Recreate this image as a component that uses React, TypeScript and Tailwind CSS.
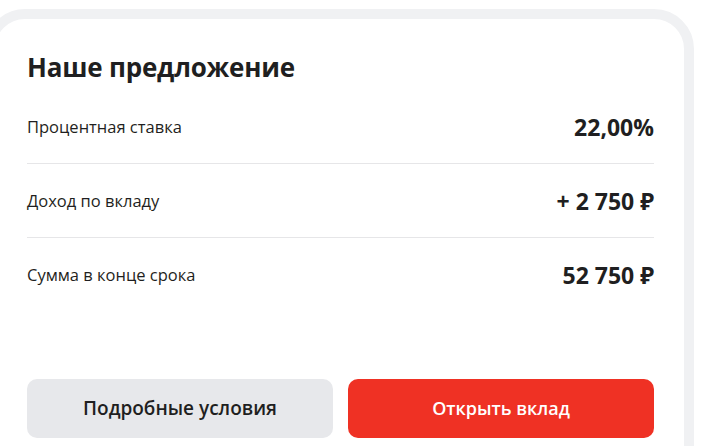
import React from "react";

type Row = { label: string; value: string };

const rows: Row[] = [
  { label: "Процентная ставка", value: "22,00%" },
  { label: "Доход по вкладу", value: "+ 2 750 ₽" },
  { label: "Сумма в конце срока", value: "52 750 ₽" },
];

export default function App() {
  return (
    <div
      className="h-[446px] w-[707px] overflow-hidden bg-white"
      style={{ fontFamily: '"Open Sans", "Noto Sans", Arial, sans-serif' }}
    >
      <div className="ml-[-15px] mt-[9px] h-[500px] w-[709px] rounded-[40px] border-[10px] border-[#f0f1f3] bg-white">
        <div className="flex flex-col pl-[32px] pr-[30px] pt-[32px]">
          <h2 className="text-[26px] font-bold leading-[32px] tracking-[-0.2px] text-[#1f1f21]">
            Наше предложение
          </h2>

          <div className="mt-[7px] flex flex-col">
            {rows.map((r, i) => (
              <div
                key={r.label}
                className={
                  "flex h-[73px] items-center justify-between " +
                  (i < rows.length - 1 ? "box-content border-b border-[#e6e6e8]" : "")
                }
              >
                <span className="text-[16.5px] leading-[22px] text-[#1f1f21]">{r.label}</span>
                <span className="text-[23px] font-bold leading-[28px] text-[#1f1f21]">{r.value}</span>
              </div>
            ))}
          </div>

          <div className="mt-[68px] flex gap-[15px]">
            <button className="flex h-[59px] flex-1 items-center justify-center rounded-[10px] bg-[#e7e8eb] text-[19px] font-semibold text-[#1f1f21]">
              Подробные условия
            </button>
            <button className="flex h-[59px] flex-1 items-center justify-center rounded-[10px] bg-[#ef3124] text-[18px] font-semibold text-white">
              Открыть вклад
            </button>
          </div>
        </div>
      </div>
    </div>
  );
}
